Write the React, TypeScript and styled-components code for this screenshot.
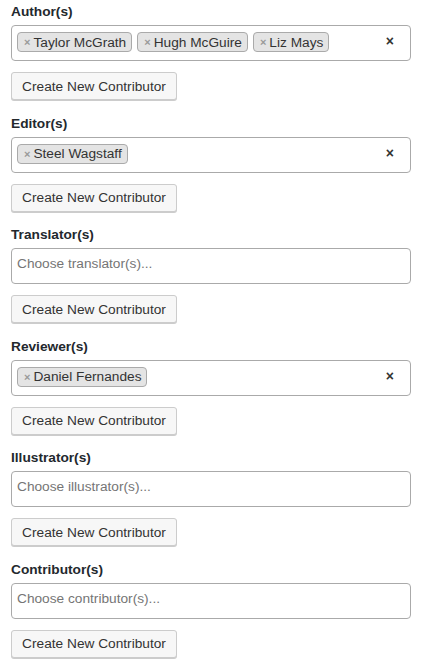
import React from "react";
import styled, { createGlobalStyle } from "styled-components";

const Global = createGlobalStyle`
  html, body { margin: 0; padding: 0; background: #fff; }
  body { font-family: "Liberation Sans", Arial, Helvetica, sans-serif; color: #333; }
  * { box-sizing: border-box; }
`;

const Page = styled.div`
  padding: 3px 13px 0 11px;
  display: flex;
  flex-direction: column;
`;

const Section = styled.div`
  display: flex;
  flex-direction: column;
  height: 111.6px;
`;

const Label = styled.div`
  font-size: 13.7px;
  font-weight: bold;
  line-height: 18px;
  color: #23282d;
  margin-bottom: 4px;
`;

const SelectBox = styled.div`
  height: 36px;
  border: 1px solid #aaa;
  border-radius: 4px;
  display: flex;
  align-items: flex-start;
  padding: 6px 0 0 5px;
  position: relative;
`;

const Tags = styled.div`
  display: flex;
  gap: 5px;
  flex-wrap: wrap;
`;

const Tag = styled.span`
  display: inline-flex;
  align-items: center;
  height: 20px;
  padding: 0 5px 0 6px;
  background: #e4e4e4;
  border: 1px solid #aaa;
  border-radius: 4px;
  font-size: 13.7px;
  color: #333;
  white-space: nowrap;
`;

const TagX = styled.span`
  color: #999;
  font-weight: bold;
  font-size: 11px;
  margin-right: 3px;
`;

const Placeholder = styled.span`
  font-size: 13.7px;
  color: #757575;
  line-height: 18px;
`;

const Clear = styled.span`
  position: absolute;
  right: 16px;
  top: 7px;
  font-weight: bold;
  font-size: 14px;
  color: #333;
`;

const Button = styled.button`
  margin-top: 11px;
  align-self: flex-start;
  height: 28px;
  width: 166px;
  padding: 0 8px;
  background: #f7f7f7;
  border: 1px solid #ccc;
  border-radius: 3px;
  box-shadow: 0 1px 0 #ccc;
  font-family: "Liberation Sans", Arial, sans-serif;
  font-size: 13.7px;
  color: #333;
  text-align: center;
  white-space: nowrap;
`;

type Field = { label: string; tags?: string[]; placeholder?: string };

const fields: Field[] = [
  { label: "Author(s)", tags: ["Taylor McGrath", "Hugh McGuire", "Liz Mays"] },
  { label: "Editor(s)", tags: ["Steel Wagstaff"] },
  { label: "Translator(s)", placeholder: "Choose translator(s)..." },
  { label: "Reviewer(s)", tags: ["Daniel Fernandes"] },
  { label: "Illustrator(s)", placeholder: "Choose illustrator(s)..." },
  { label: "Contributor(s)", placeholder: "Choose contributor(s)..." },
];

export default function App() {
  return (
    <>
      <Global />
      <Page>
        {fields.map((f) => (
          <Section key={f.label}>
            <Label>{f.label}</Label>
            <SelectBox>
              {f.tags ? (
                <>
                  <Tags>
                    {f.tags.map((t) => (
                      <Tag key={t}>
                        <TagX>×</TagX>
                        {t}
                      </Tag>
                    ))}
                  </Tags>
                  <Clear>×</Clear>
                </>
              ) : (
                <Placeholder>{f.placeholder}</Placeholder>
              )}
            </SelectBox>
            <Button>Create New Contributor</Button>
          </Section>
        ))}
      </Page>
    </>
  );
}
